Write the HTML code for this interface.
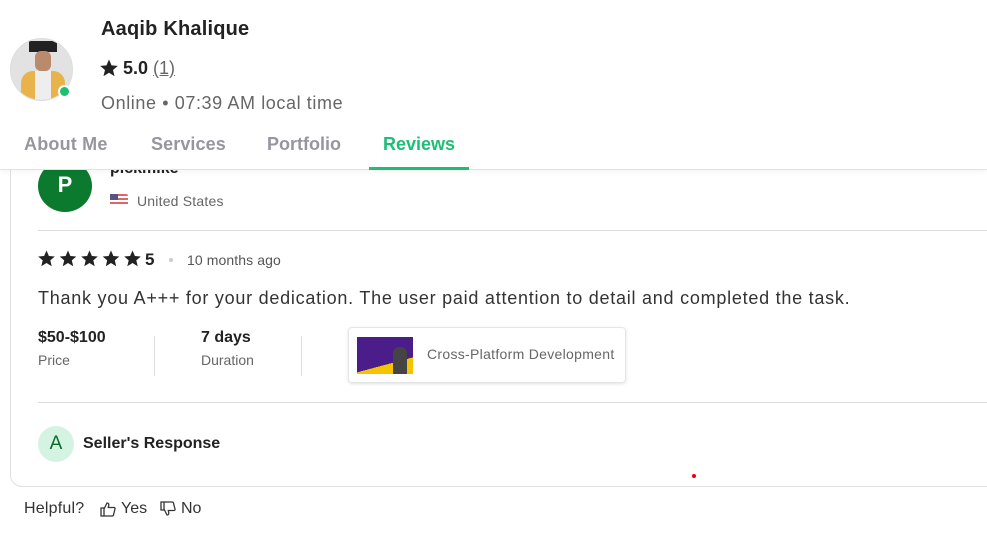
<!DOCTYPE html>
<html><head><meta charset="utf-8"><style>
*{margin:0;padding:0;box-sizing:border-box}
body{width:987px;height:546px;background:#fff;font-family:"Liberation Sans",sans-serif;position:relative;overflow:hidden;color:#222}
.a{position:absolute;white-space:nowrap}
</style></head><body>
<div class="a" style="left:10px;top:150px;width:1000px;height:337px;border:1px solid #e0e0e0;border-radius:12px"></div>
<div class="a" style="left:38px;top:160px;width:54px;height:52px;border-radius:50%;background:#0b7a2f;color:#fff;font-size:22px;font-weight:bold;text-align:center;line-height:50px">P</div>
<div class="a" style="left:110px;top:160px;font-size:16px;font-weight:bold">pickmike</div>
<div class="a" style="left:110px;top:194px;width:18px;height:12px;background:repeating-linear-gradient(#d66 0 2px,#fff 2px 4px);border-radius:2px"><div style="width:8px;height:6px;background:#558"></div></div>
<div class="a" style="left:137px;top:193px;font-size:14px;color:#666;letter-spacing:.2px">United States</div>
<div class="a" style="left:38px;top:230px;width:960px;height:1px;background:#ddd"></div>
<svg class="a" style="left:38px;top:250px" width="104" height="18" viewBox="0 0 104 18"><g fill="#222"><path id="s" d="M8.5 0.5l2.4 5.5 5.9.5-4.5 3.9 1.4 5.8-5.2-3.2-5.2 3.2 1.4-5.8L.2 6.5l5.9-.5z"/><use href="#s" x="21.5"/><use href="#s" x="43"/><use href="#s" x="64.5"/><use href="#s" x="86"/></g></svg>
<div class="a" style="left:145px;top:250px;font-size:17px;font-weight:bold">5</div>
<div class="a" style="left:169px;top:258px;width:4px;height:4px;border-radius:50%;background:#ccc"></div>
<div class="a" style="left:187px;top:252px;font-size:14px;color:#555;letter-spacing:.1px">10 months ago</div>
<div class="a" style="left:38px;top:288px;font-size:18px;color:#333;letter-spacing:.75px">Thank you A+++ for your dedication. The user paid attention to detail and completed the task.</div>
<div class="a" style="left:38px;top:329px;font-size:16px;font-weight:bold">$50-$100</div>
<div class="a" style="left:38px;top:352px;font-size:14px;color:#666">Price</div>
<div class="a" style="left:154px;top:336px;width:1px;height:40px;background:#ddd"></div>
<div class="a" style="left:201px;top:329px;font-size:16px;font-weight:bold">7 days</div>
<div class="a" style="left:201px;top:352px;font-size:14px;color:#666">Duration</div>
<div class="a" style="left:301px;top:336px;width:1px;height:40px;background:#ddd"></div>
<div class="a" style="left:348px;top:327px;width:278px;height:56px;border:1px solid #e6e6e6;border-radius:4px;box-shadow:0 1px 3px rgba(0,0,0,.12)"></div>
<div class="a" style="left:357px;top:337px;width:56px;height:37px;background:linear-gradient(165deg,#4a1d8a 0 68%,#f5c400 68%)"><div style="position:absolute;left:36px;top:10px;width:14px;height:27px;background:#444;border-radius:6px 6px 0 0"></div></div>
<div class="a" style="left:427px;top:346px;font-size:14px;color:#666;letter-spacing:.3px">Cross-Platform Development</div>
<div class="a" style="left:38px;top:402px;width:960px;height:1px;background:#ddd"></div>
<div class="a" style="left:38px;top:426px;width:36px;height:36px;border-radius:50%;background:#d5f3e3;color:#0b6b2c;font-size:19px;text-align:center;line-height:36px">A</div>
<div class="a" style="left:83px;top:435px;font-size:16px;font-weight:bold">Seller's Response</div>
<div class="a" style="left:692px;top:474px;width:4px;height:4px;border-radius:50%;background:#e00"></div>
<div class="a" style="left:24px;top:500px;font-size:16px;color:#333;letter-spacing:.2px">Helpful?</div>
<svg class="a" style="left:100px;top:501px" width="16" height="16" viewBox="0 0 16 16" fill="none" stroke="#333" stroke-width="1.3"><path d="M1 7h3v8H1zM4 8l3-6c1.5 0 2 1 1.7 2.5L8.3 6.5H14c.8 0 1.2.7 1 1.4l-1.5 6c-.2.7-.7 1.1-1.4 1.1H4"/></svg>
<div class="a" style="left:121px;top:500px;font-size:16px;color:#333">Yes</div>
<svg class="a" style="left:160px;top:501px;transform:scaleY(-1)" width="16" height="16" viewBox="0 0 16 16" fill="none" stroke="#333" stroke-width="1.3"><path d="M1 7h3v8H1zM4 8l3-6c1.5 0 2 1 1.7 2.5L8.3 6.5H14c.8 0 1.2.7 1 1.4l-1.5 6c-.2.7-.7 1.1-1.4 1.1H4"/></svg>
<div class="a" style="left:181px;top:500px;font-size:16px;color:#333">No</div>
<div class="a" style="left:0;top:0;width:987px;height:170px;background:#fff;border-bottom:1px solid #e2e2e2;box-shadow:0 3px 4px rgba(0,0,0,.03)"></div>
<div class="a" style="left:10px;top:38px;width:63px;height:63px;border-radius:50%;background:#e2e2e2;overflow:hidden;border:1px solid #ddd">
<div style="position:absolute;left:18px;top:2px;width:28px;height:11px;background:#222"></div>
<div style="position:absolute;left:24px;top:12px;width:16px;height:20px;border-radius:6px;background:#b98a6c"></div>
<div style="position:absolute;left:10px;top:32px;width:44px;height:32px;border-radius:12px 12px 0 0;background:#e8b34a"></div>
<div style="position:absolute;left:24px;top:32px;width:16px;height:32px;background:#eee"></div></div>
<div class="a" style="left:58px;top:85px;width:13px;height:13px;border-radius:50%;background:#1dbf73;border:2px solid #fff"></div>
<div class="a" style="left:101px;top:18px;font-size:20px;font-weight:bold;color:#222;letter-spacing:.2px">Aaqib Khalique</div>
<svg class="a" style="left:100px;top:59px" width="18" height="17" viewBox="0 0 17 16"><path fill="#222" d="M8.5 0.5l2.4 5.5 5.9.5-4.5 3.9 1.4 5.8-5.2-3.2-5.2 3.2 1.4-5.8L.2 6.5l5.9-.5z"/></svg>
<div class="a" style="left:123px;top:58px;font-size:18px;font-weight:bold">5.0 <span style="font-weight:normal;color:#666;text-decoration:underline">(1)</span></div>
<div class="a" style="left:101px;top:93px;font-size:18px;color:#666;letter-spacing:.6px">Online • 07:39 AM local time</div>
<div class="a" style="left:24px;top:134px;font-size:18px;font-weight:bold;color:#95979d;letter-spacing:.2px">About Me</div>
<div class="a" style="left:151px;top:134px;font-size:18px;font-weight:bold;color:#95979d;letter-spacing:.1px">Services</div>
<div class="a" style="left:267px;top:134px;font-size:18px;font-weight:bold;color:#95979d">Portfolio</div>
<div class="a" style="left:383px;top:134px;font-size:18px;font-weight:bold;color:#1dbf73">Reviews</div>
<div class="a" style="left:369px;top:167px;width:100px;height:3px;background:#1dbf73"></div>
</body></html>
